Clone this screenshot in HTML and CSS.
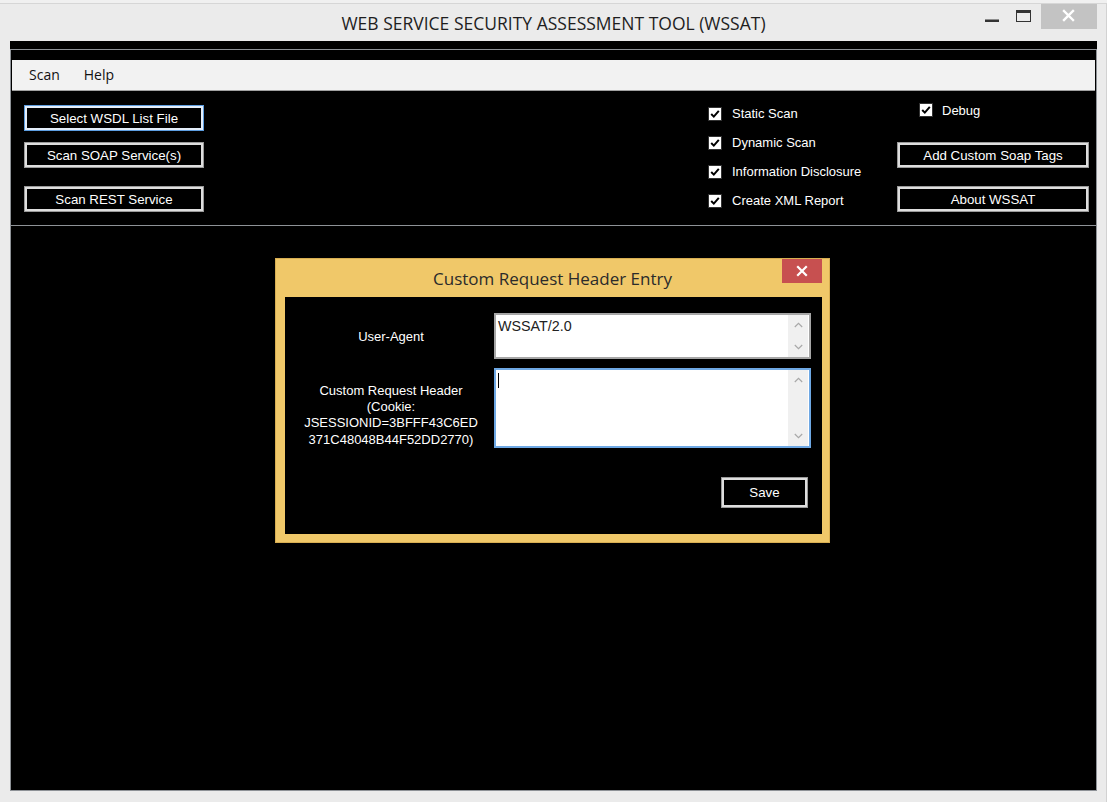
FILE: index.html
```html
<!DOCTYPE html>
<html>
<head>
<meta charset="utf-8">
<title>WSSAT</title>
<link rel="stylesheet" href="styles.css">
</head>
<body>
<div class="window">
  <div class="titlebar">
    <div class="tb-spacer"></div>
    <div class="title">WEB SERVICE SECURITY ASSESSMENT TOOL (WSSAT)</div>
    <div class="controls">
      <span class="ctl"><svg width="32" height="25" viewBox="0 0 32 25"><rect x="8" y="15.5" width="14" height="2.5" fill="#333"/></svg></span>
      <span class="ctl"><svg width="32" height="25" viewBox="0 0 32 25"><rect x="7.5" y="6.5" width="14" height="11" fill="none" stroke="#333" stroke-width="1"/><rect x="7" y="6" width="15" height="3" fill="#333"/></svg></span>
      <span class="ctl close"><svg width="56" height="25" viewBox="0 0 56 25"><path d="M23 7 L32 16 M32 7 L23 16" stroke="#fff" stroke-width="2.4" stroke-linecap="square"/></svg></span>
    </div>
  </div>
  <div class="client">
    <div class="toppanel">
      <div class="menubar"><span class="menu-item">Scan</span><span class="menu-item">Help</span></div>
      <div class="toolarea">
        <div class="col-left">
          <div class="btn focused">Select WSDL List File</div>
          <div class="btn b2">Scan SOAP Service(s)</div>
          <div class="btn b3">Scan REST Service</div>
        </div>
        <div class="col-checks">
          <div class="check"><span class="box"><svg width="14" height="14" viewBox="0 0 14 14"><rect x="0.5" y="0.5" width="13" height="13" fill="#fff" stroke="#333"/><path d="M3.2 7 L5.8 9.6 L10.8 3.8" fill="none" stroke="#000" stroke-width="2"/></svg></span>Static Scan</div>
          <div class="check"><span class="box"><svg width="14" height="14" viewBox="0 0 14 14"><rect x="0.5" y="0.5" width="13" height="13" fill="#fff" stroke="#333"/><path d="M3.2 7 L5.8 9.6 L10.8 3.8" fill="none" stroke="#000" stroke-width="2"/></svg></span>Dynamic Scan</div>
          <div class="check"><span class="box"><svg width="14" height="14" viewBox="0 0 14 14"><rect x="0.5" y="0.5" width="13" height="13" fill="#fff" stroke="#333"/><path d="M3.2 7 L5.8 9.6 L10.8 3.8" fill="none" stroke="#000" stroke-width="2"/></svg></span>Information Disclosure</div>
          <div class="check"><span class="box"><svg width="14" height="14" viewBox="0 0 14 14"><rect x="0.5" y="0.5" width="13" height="13" fill="#fff" stroke="#333"/><path d="M3.2 7 L5.8 9.6 L10.8 3.8" fill="none" stroke="#000" stroke-width="2"/></svg></span>Create XML Report</div>
        </div>
        <div class="col-right">
          <div class="check debug"><span class="box"><svg width="14" height="14" viewBox="0 0 14 14"><rect x="0.5" y="0.5" width="13" height="13" fill="#fff" stroke="#333"/><path d="M3.2 7 L5.8 9.6 L10.8 3.8" fill="none" stroke="#000" stroke-width="2"/></svg></span>Debug</div>
          <div class="btn r1">Add Custom Soap Tags</div>
          <div class="btn r2">About WSSAT</div>
        </div>
      </div>
    </div>
    <div class="lowerpanel">
      <div class="dialog">
        <div class="dlg-titlebar">
          <div class="tb-spacer"></div>
          <div class="dlg-title">Custom Request Header Entry</div>
          <div class="dlg-close"><svg width="40" height="24" viewBox="0 0 40 24"><path d="M16 8 L24 16 M24 8 L16 16" stroke="#fff" stroke-width="2.2" stroke-linecap="square"/></svg></div>
        </div>
        <div class="dlg-body">
          <div class="field-row">
            <div class="lbl">User-Agent</div>
            <div class="textbox tb-small">
              <div class="tb-text">WSSAT/2.0</div>
              <div class="scroll">
                <span class="sbtn"><svg width="9" height="6" viewBox="0 0 9 6"><polyline points="0.8,5 4.5,1.3 8.2,5" fill="none" stroke="#a8a8a8" stroke-width="1.2"/></svg></span>
                <span class="sbtn"><svg width="9" height="6" viewBox="0 0 9 6"><polyline points="0.8,1 4.5,4.7 8.2,1" fill="none" stroke="#a8a8a8" stroke-width="1.2"/></svg></span>
              </div>
            </div>
          </div>
          <div class="field-row big">
            <div class="lbl multi">Custom Request Header<br>(Cookie:<br>JSESSIONID=3BFFF43C6ED<br>371C48048B44F52DD2770)</div>
            <div class="textbox tb-big">
              <div class="tb-text"><span class="caret"></span></div>
              <div class="scroll">
                <span class="sbtn"><svg width="9" height="6" viewBox="0 0 9 6"><polyline points="0.8,5 4.5,1.3 8.2,5" fill="none" stroke="#a8a8a8" stroke-width="1.2"/></svg></span>
                <span class="sbtn"><svg width="9" height="6" viewBox="0 0 9 6"><polyline points="0.8,1 4.5,4.7 8.2,1" fill="none" stroke="#a8a8a8" stroke-width="1.2"/></svg></span>
              </div>
            </div>
          </div>
          <div class="actions"><div class="btn save">Save</div></div>
        </div>
      </div>
    </div>
  </div>
</div>
</body>
</html>
```

FILE: styles.css
```css
* { box-sizing: border-box; }
html, body { margin: 0; padding: 0; }
body {
  width: 1107px;
  height: 802px;
  overflow: hidden;
  background: #f0f0f0;
  font-family: "Liberation Sans", Arial, sans-serif;
}
.window {
  margin-top: 3px;
  height: 799px;
  border-top: 1px solid #d6d6d6;
  border-right: 1px solid #d2d2d2;
  background: #ebebeb;
  padding: 0 9px 11px 10px;
  display: flex;
  flex-direction: column;
}
.titlebar {
  height: 37px;
  flex: none;
  display: grid;
  grid-template-columns: 1fr auto 1fr;
  align-items: start;
}
.title {
  line-height: 38px;
  font-family: "Open Sans", "Noto Sans", sans-serif;
  font-size: 17.5px;
  color: #1e1e1e;
  white-space: nowrap;
}
.controls {
  justify-self: end;
  display: flex;
  height: 25px;
}
.ctl { display: block; height: 25px; }
.ctl svg { display: block; }
.ctl.close { background: #c3c3c3; }

.client {
  flex: none;
  height: 750px;
  background: #000;
  padding-top: 8px;
  display: flex;
  flex-direction: column;
}
.toppanel {
  height: 177px;
  flex: none;
  border: 1px solid #8e9297;
  padding-top: 10px;
  display: flex;
  flex-direction: column;
}
.menubar {
  height: 31px;
  flex: none;
  margin: 0 1px;
  background: #f2f2f2;
  border-bottom: 1px solid #a0a0a0;
  display: flex;
  align-items: center;
  padding-left: 17px;
  padding-bottom: 1px;
  gap: 24px;
  font-family: "Open Sans", "Noto Sans", sans-serif;
  font-size: 14px;
  color: #111;
}
.toolarea {
  flex: 1;
  display: flex;
  padding: 0 7px 0 13px;
}
.col-left {
  width: 180px;
  padding-top: 14px;
  display: flex;
  flex-direction: column;
}
.btn {
  height: 26px;
  background: #000;
  color: #fff;
  border: 1px solid #9a9a9a;
  box-shadow: inset 0 0 0 2px #dedede;
  font-size: 13.3px;
  display: flex;
  align-items: center;
  justify-content: center;
  white-space: nowrap;
}
.btn.focused {
  border-color: #5d9de0;
  box-shadow: inset 0 0 0 2px #e4eefa;
}
.col-left .b2 { margin-top: 11px; }
.col-left .b3 { margin-top: 18px; }

.col-checks {
  margin-left: auto;
  width: 189px;
  padding-top: 8px;
}
.check {
  height: 29px;
  display: flex;
  align-items: center;
  color: #fff;
  font-size: 13px;
  white-space: nowrap;
}
.check .box { width: 14px; height: 14px; margin-right: 10px; flex: none; }
.check .box svg { display: block; }
.col-right {
  width: 192px;
  padding-top: 10px;
  display: flex;
  flex-direction: column;
}
.check.debug { height: 18px; padding-left: 22px; }
.check.debug .box { margin-right: 9px; }
.col-right .r1 { margin-top: 23px; }
.col-right .r2 { margin-top: 18px; }

.lowerpanel {
  flex: 1;
  border: 1px solid #8e9297;
  border-top: none;
  display: flex;
  justify-content: center;
  align-items: flex-start;
  padding-top: 32px;
  padding-right: 2px;
}
.dialog {
  width: 555px;
  height: 285px;
  background: #f0c869;
  border: 1px solid #d8ae52;
  display: flex;
  flex-direction: column;
}
.dlg-titlebar {
  height: 38px;
  flex: none;
  display: grid;
  grid-template-columns: 1fr auto 1fr;
  align-items: start;
}
.dlg-title {
  line-height: 40px;
  font-family: "Open Sans", "Noto Sans", sans-serif;
  font-size: 17px;
  color: #2b2b2b;
  white-space: nowrap;
}
.dlg-close {
  justify-self: end;
  margin-right: 7px;
  width: 40px;
  height: 24px;
  background: #c75050;
}
.dlg-close svg { display: block; }
.dlg-body {
  flex: none;
  height: 237px;
  margin: 0 7px 8px 9px;
  background: #000;
  padding: 16px 11px 0 0;
  display: flex;
  flex-direction: column;
}
.field-row {
  display: grid;
  grid-template-columns: 209px 317px;
  align-items: center;
  height: 46px;
}
.field-row.big {
  height: 80px;
  margin-top: 9px;
  align-items: end;
}
.lbl {
  color: #fff;
  font-size: 13px;
  text-align: center;
  padding-left: 3px;
}
.lbl.multi {
  line-height: 16.3px;
  margin-bottom: 0;
}
.textbox {
  background: #fff;
  border: 2px solid #a6a6a6;
  display: flex;
  padding: 0 1px 0 0;
}
.tb-small { height: 46px; }
.tb-big { height: 80px; border-color: #6ea8e4; }
.tb-text {
  flex: 1;
  padding: 3px 2px;
  font-size: 14.3px;
  line-height: 17px;
  color: #222;
}
.caret {
  display: block;
  width: 1px;
  height: 15px;
  background: #000;
  margin-top: 0;
}
.scroll {
  width: 20px;
  background: #f0f0f0;
  display: flex;
  flex-direction: column;
  justify-content: space-between;
}
.sbtn {
  height: 20px;
  display: flex;
  align-items: center;
  justify-content: center;
}
.sbtn svg { display: block; }
.actions {
  display: flex;
  justify-content: flex-end;
  padding-right: 3px;
  margin-top: 29px;
}
.btn.save { width: 87px; height: 31px; }
```
